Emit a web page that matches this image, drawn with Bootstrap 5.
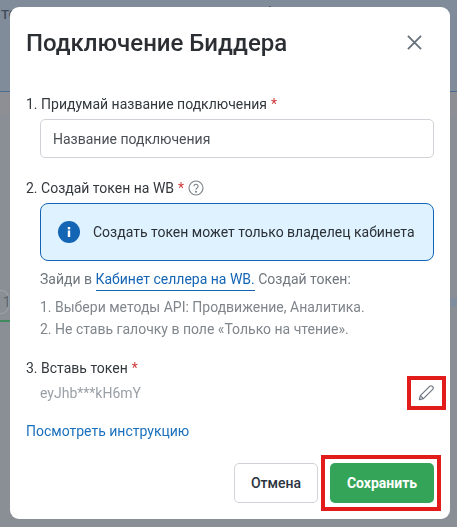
<!DOCTYPE html>
<html lang="ru">
<head>
  <meta charset="UTF-8">
  <meta name="viewport" content="width=device-width, initial-scale=1.0">
  <title>Подключение Биддера</title>
  <link href="https://cdn.jsdelivr.net/npm/bootstrap@5.3.7/dist/css/bootstrap.min.css" rel="stylesheet">
  <style>
    html, body { height: 100%; }
    body { font-family: Roboto, "Liberation Sans", sans-serif; background: #8a8e95; overflow: hidden; color: #2b2f33; }
    .page-top { height: 92px; background: #808c99; border-bottom: 1px solid #4a6b94; overflow: hidden; color: #3d4a59; font-size: 17px; line-height: 20px; padding: 3px 0 0 1px; }
    .page-dot { width: 2px; height: 3px; margin: 3px 186px 0 0; background: #555e68; }
    .page-strip { height: 24px; background: #8d8f94; }
    .page-row { margin-top: 174px; height: 24px; }
    .page-cell { width: 9px; border: 1px solid #9fa3a8; border-left: 0; border-radius: 0 8px 8px 0; font-size: 14px; line-height: 22px; padding-left: 3px; color: #5c6670; }
    .page-tick { width: 7px; height: 9px; margin-top: 8px; background: #7f8d9c; }
    .page-line { margin-top: 6px; height: 2px; width: 10px; background: #3f8a5e; }

    .bid-dialog { width: 440px; max-width: 440px; margin: 7px 0 0 10px; }
    .bid-dialog .modal-content { border: 0; border-radius: 9px; height: 512px; }
    .bid-head { padding: 22px 16px 0; height: 72px; align-items: flex-start; }
    .bid-title { font-size: 24px; line-height: 28px; font-weight: 500; color: #2b2f33; margin: 0; }
    .bid-close { width: 15px; height: 15px; margin: 6px 12px 0 0; color: #68727d; }
    .bid-body { padding: 16px 16px 0; font-size: 14px; }
    .bid-label { font-size: 14px; line-height: 18px; color: #33383d; margin: 0; display: flex; align-items: center; }
    .step-two { margin-top: 21px; }
    .step-three { margin-top: 19px; }
    .req { color: #cf3a3a; margin-left: 4px; }
    .bid-step { padding-left: 14px; padding-right: 0; }
    .bid-input { height: 39px; margin-top: 6px; border: 1px solid #cfd2d6; border-radius: 5px; font-size: 14px; padding: 0 12px; color: #3f444a; }
    .bid-input::placeholder { color: #4a4f55; opacity: 1; }
    .bid-note { height: 58px; margin-top: 6px; border: 1px solid #1565b5; border-radius: 8px; background: #def2ff; color: #2b3036; padding: 0 0 0 17px; gap: 13px; font-size: 14px; }
    .bid-hint { color: #6f767d; line-height: 18px; margin-top: 9px; }
    .bid-hint a { color: #1565b5; text-decoration: none; border-bottom: 1px solid #1565b5; padding-bottom: 3px; }
    .bid-steps { color: #80868c; font-size: 14px; line-height: 22px; margin: 8px 0 0; padding: 0; list-style: none; }
    .token-row { height: 34px; margin-top: -1px; color: #9aa0a6; }
    .pencil-wrap { position: relative; width: 18px; height: 18px; color: #6d7680; margin: -4px -1px 0 0; }
    .red-mark { position: absolute; border: 3px solid #e21b1b; pointer-events: none; }
    .pencil-wrap .red-mark { left: -10px; right: -11px; top: -6px; bottom: -10px; border-width: 4px; }
    .bid-guide { display: block; color: #1a70bd; text-decoration: none; line-height: 18px; margin-top: 12px; }
    .bid-foot { padding: 0 16px; margin-bottom: 16px; gap: 12px; }
    .btn-cancel { width: 84px; height: 40px; border: 1px solid #cfd2d6; border-radius: 5px; background: #fff; color: #2b3440; font-weight: 500; font-size: 14px; padding: 0; }
    .btn-save-wrap { position: relative; }
    .btn-save { width: 104px; height: 40px; border: 0; border-radius: 5px; background: #34a558; color: #fff; font-weight: 700; font-size: 14px; padding: 0; }
    .btn-save-wrap .red-mark { left: -9px; right: -7px; top: -8px; bottom: -8px; border-width: 4px; }
  </style>
</head>
<body>
  <div class="page-top d-flex justify-content-between"><span>те</span><div class="page-dot"></div></div>
  <div class="page-strip"></div>
  <div class="d-flex justify-content-between page-row">
    <div class="page-cell">1</div>
    <div class="page-tick"></div>
  </div>
  <div class="page-line"></div>

  <div class="modal d-block" tabindex="-1">
    <div class="modal-dialog bid-dialog">
      <div class="modal-content">
        <div class="modal-header border-0 bid-head d-flex justify-content-between">
          <h5 class="bid-title">Подключение Биддера</h5>
          <svg class="bid-close" viewBox="0 0 16 16" fill="none" stroke="currentColor" stroke-width="2"><path d="M1 1 15 15M15 1 1 15"/></svg>
        </div>
        <div class="modal-body bid-body">
          <label class="bid-label" for="connName">1. Придумай название подключения <span class="req">*</span></label>
          <div class="bid-step">
            <input type="text" class="form-control bid-input" id="connName" placeholder="Название подключения">
          </div>

          <div class="bid-label step-two">2. Создай токен на WB <span class="req">*</span>
            <svg class="ms-1" width="16" height="16" viewBox="0 0 16 16" fill="none" stroke="#7c8288" stroke-width="1.1"><circle cx="8" cy="8" r="7"/><path d="M5.9 6.3a2.1 2.1 0 1 1 3.2 1.8c-.7.4-1.1.8-1.1 1.6"/><circle cx="8" cy="11.7" r=".5" fill="#7c8288"/></svg>
          </div>
          <div class="bid-step">
            <div class="d-flex align-items-center bid-note">
              <svg width="22" height="22" viewBox="0 0 22 22" class="flex-shrink-0"><circle cx="11" cy="11" r="11" fill="#1565b5"/><rect x="9.8" y="9.5" width="2.4" height="6.5" fill="#fff"/><rect x="9.8" y="6" width="2.4" height="2.4" fill="#fff"/></svg>
              <span>Создать токен может только владелец кабинета</span>
            </div>
            <div class="bid-hint">Зайди в <a href="#">Кабинет селлера на WB.</a> Создай токен:</div>
            <ol class="bid-steps">
              <li>1. Выбери методы API: Продвижение, Аналитика.</li>
              <li>2. Не ставь галочку в поле «Только на чтение».</li>
            </ol>
          </div>

          <div class="bid-label step-three">3. Вставь токен <span class="req">*</span></div>
          <div class="bid-step">
            <div class="d-flex align-items-center justify-content-between token-row">
              <span>eyJhb***kH6mY</span>
              <span class="pencil-wrap">
                <svg width="18" height="18" viewBox="0 0 18 18" fill="none" stroke="currentColor" stroke-width="1.2" stroke-linejoin="round"><path d="M2.4 15.6 3.3 11.6 12.6 2.3a1.9 1.9 0 0 1 2.7 0l.4.4a1.9 1.9 0 0 1 0 2.7l-9.3 9.3Z"/><path d="M3.3 11.6 6.4 14.7"/></svg>
                <span class="red-mark"></span>
              </span>
            </div>
          </div>
          <a class="bid-guide" href="#">Посмотреть инструкцию</a>
        </div>
        <div class="d-flex justify-content-end bid-foot">
          <button type="button" class="btn btn-cancel">Отмена</button>
          <div class="btn-save-wrap">
            <button type="button" class="btn btn-save">Сохранить</button>
            <span class="red-mark"></span>
          </div>
        </div>
      </div>
    </div>
  </div>
  <script src="https://cdn.jsdelivr.net/npm/bootstrap@5.3.7/dist/js/bootstrap.bundle.min.js"></script>
</body>
</html>
